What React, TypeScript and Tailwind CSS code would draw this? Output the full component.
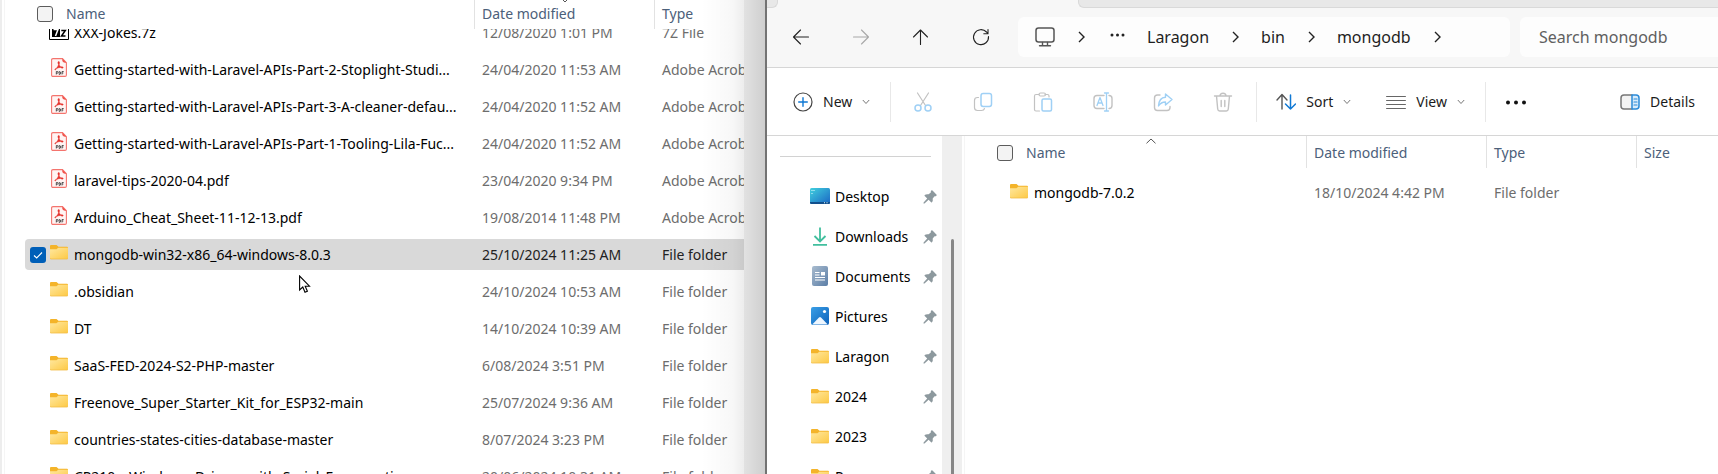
import type { ReactNode } from 'react'
import clsx from 'clsx'

type Kind = 'archive' | 'pdf' | 'folder'
type FileRow = { name: string; date: string; type: string; kind: Kind; selected?: boolean }

const downloads: FileRow[] = [
  { name: 'XXX-Jokes.7z', date: '12/08/2020 1:01 PM', type: '7Z File', kind: 'archive' },
  { name: 'Getting-started-with-Laravel-APIs-Part-2-Stoplight-Studi...', date: '24/04/2020 11:53 AM', type: 'Adobe Acrob', kind: 'pdf' },
  { name: 'Getting-started-with-Laravel-APIs-Part-3-A-cleaner-defau...', date: '24/04/2020 11:52 AM', type: 'Adobe Acrob', kind: 'pdf' },
  { name: 'Getting-started-with-Laravel-APIs-Part-1-Tooling-Lila-Fuc...', date: '24/04/2020 11:52 AM', type: 'Adobe Acrob', kind: 'pdf' },
  { name: 'laravel-tips-2020-04.pdf', date: '23/04/2020 9:34 PM', type: 'Adobe Acrob', kind: 'pdf' },
  { name: 'Arduino_Cheat_Sheet-11-12-13.pdf', date: '19/08/2014 11:48 PM', type: 'Adobe Acrob', kind: 'pdf' },
  { name: 'mongodb-win32-x86_64-windows-8.0.3', date: '25/10/2024 11:25 AM', type: 'File folder', kind: 'folder', selected: true },
  { name: '.obsidian', date: '24/10/2024 10:53 AM', type: 'File folder', kind: 'folder' },
  { name: 'DT', date: '14/10/2024 10:39 AM', type: 'File folder', kind: 'folder' },
  { name: 'SaaS-FED-2024-S2-PHP-master', date: '6/08/2024 3:51 PM', type: 'File folder', kind: 'folder' },
  { name: 'Freenove_Super_Starter_Kit_for_ESP32-main', date: '25/07/2024 9:36 AM', type: 'File folder', kind: 'folder' },
  { name: 'countries-states-cities-database-master', date: '8/07/2024 3:23 PM', type: 'File folder', kind: 'folder' },
  { name: 'CP210x_Windows_Drivers_with_Serial_Enumeration', date: '20/06/2024 10:31 AM', type: 'File folder', kind: 'folder' },
]

function FolderIcon() {
  return (
    <svg viewBox="0 0 18 15" className="h-[15px] w-[18px] shrink-0" aria-hidden="true">
      <defs>
        <linearGradient id="folder" x1="0" y1="0" x2="1" y2="1">
          <stop offset="0" stopColor="#ffe8a0" />
          <stop offset="1" stopColor="#fdc945" />
        </linearGradient>
      </defs>
      <path d="M0 1Q0 0 1 0h5.500l2 1.700H17q1 0 1 1V6H0Z" fill="#f4b42a" />
      <path d="M0 4.200h6.500L8.300 2.700H18V13q0 1-1 1H1q-1 0-1-1Z" fill="url(#folder)" />
      <path d="M0 13q0 1 1 1h16q1 0 1-1" fill="none" stroke="#f3bd48" strokeWidth="0.8" />
    </svg>
  )
}

function PdfIcon() {
  return (
    <svg viewBox="0 0 16 19" className="h-[19px] w-4 shrink-0" aria-hidden="true">
      <path d="M2 .6h9.500l3.900 4V17q0 1.400-1.400 1.400H2Q.6 18.400.6 17V2Q.6.6 2 .6Z" fill="#fff4f3" stroke="#f4746e" strokeWidth="1.100" />
      <path d="M11.300.6l4.100 4.200h-1.600q-2.500-.6-2.500-2.400Z" fill="#f0524b" />
      <path d="M7.800 3.500c-1.300 0-1 1.900-.2 3.200-.6 1.500-1.400 2.800-2.400 3.800-1.400.3-1.700 1-1.200 1.300.6.300 1.300-.5 1.900-1.500 1.200-.5 2.400-.8 3.700-.9 1 .8 2.400 1 2.600.3.100-.8-1.100-1-2.500-.9-.7-.6-1.200-1.300-1.500-2.100.4-1.400.5-3.200-.4-3.200Z" fill="#e5322d" stroke="#e5322d" strokeWidth="0.5" />
      <path d="M5.300 16.500v-3h1q.9 0 .9.800t-.9.900h-1M8.200 13.500v3q1.500 0 1.500-1.500T8.200 13.500M11 16.500v-3h1.700M11 15h1.400" fill="none" stroke="#333" strokeWidth="0.8" />
    </svg>
  )
}

function ArchiveIcon() {
  return (
    <svg viewBox="0 0 20 20" className="size-5 shrink-0" aria-hidden="true">
      <path d="M.5 4.500h19v14H.5Z" fill="#fff" stroke="#000" />
      <path d="M3 6h8v10H3Z" />
      <path d="M4.500 8.500h4.500L6.500 15" fill="none" stroke="#fff" strokeWidth="1.500" />
      <path d="M12.300 9.500h4L12.500 15h4" fill="none" stroke="#000" strokeWidth="1.500" />
    </svg>
  )
}

function FileIcon({ kind }: { kind: Kind }) {
  if (kind === 'pdf') return <PdfIcon />
  if (kind === 'archive') return <ArchiveIcon />
  return <FolderIcon />
}

function SelectAll({ label }: { label: string }) {
  return (
    <input
      type="checkbox"
      aria-label={label}
      className="size-4 shrink-0 appearance-none rounded-[3px] border border-[#5c5c5c] bg-[#f3f3f3]"
    />
  )
}

function Cursor() {
  return (
    <svg viewBox="0 0 13 19" className="pointer-events-none absolute top-[275px] left-[299px] h-[19px] w-[13px]" aria-hidden="true">
      <path d="M.6 1v14l3.200-3 2.200 5.200 2.400-1-2.200-5h4.300Z" fill="#fff" stroke="#000" strokeWidth="1.100" />
    </svg>
  )
}

function LeftWindow() {
  return (
    <section className="relative flex min-w-0 overflow-hidden border-r-2 border-[#737373] bg-white">
      <div className="w-[5px] shrink-0 border-r border-l-2 border-r-[#f5f5f5] border-l-[#ededed]" />
      <table className="ml-5 block min-w-0 flex-1">
        <thead className="relative z-10 block bg-white">
          <tr className="grid h-[29px] grid-cols-[minmax(0,1fr)_180px_90px] text-left text-[#4c607a]">
            <th className="flex items-center gap-[13px] pb-0.5 pl-3 font-normal">
              <SelectAll label="Select all downloads" />
              Name
            </th>
            <th className="relative flex items-center border-l border-[#e2e2e2] pb-0.5 pl-[7px] font-normal">
              Date modified
              <svg viewBox="0 0 10 5" className="absolute top-[-2px] left-[85px] h-[5px] w-[10px]" aria-hidden="true">
                <path d="M1 0l4 4 4-4" fill="none" stroke="#555" />
              </svg>
            </th>
            <th className="flex items-center border-l border-[#e2e2e2] pb-0.5 pl-[7px] font-normal">Type</th>
          </tr>
        </thead>
        <tbody className="-mt-[15px] block">
          {downloads.map((f) => (
            <tr key={f.name} className="grid h-[37px] grid-cols-[minmax(0,1fr)_180px_90px] py-[3px] whitespace-nowrap">
              <td className={clsx('flex min-w-0 items-center pl-[5px] text-black', f.selected && 'rounded-l-sm bg-[#d9d9d9]')}>
                <span className="flex w-[19px] shrink-0">
                  {f.selected && (
                    <label className="relative flex size-4">
                      <input type="checkbox" defaultChecked aria-label={f.name} className="size-4 appearance-none rounded-[3px] bg-[#005fb8]" />
                      <svg viewBox="0 0 16 16" className="pointer-events-none absolute inset-0 size-4" aria-hidden="true">
                        <path d="M4 8.500l2.700 2.500L12 5.500" fill="none" stroke="#fff" strokeWidth="1.100" />
                      </svg>
                    </label>
                  )}
                </span>
                <span className="mr-[5px] flex w-5 shrink-0 justify-center pb-1">
                  <FileIcon kind={f.kind} />
                </span>
                {f.name}
              </td>
              <td className={clsx('flex items-center pl-2', f.selected ? 'bg-[#d9d9d9] text-[#222]' : 'text-[#6d6d6d]')}>{f.date}</td>
              <td className={clsx('flex items-center pl-2', f.selected ? 'bg-[#d9d9d9] text-[#222]' : 'text-[#6d6d6d]')}>
                {f.type}
              </td>
            </tr>
          ))}
        </tbody>
      </table>
      <div className="w-[21px] shrink-0 bg-[#f3f3f3]" />
      <div className="pointer-events-none absolute inset-y-0 right-0 z-20 w-16 bg-linear-to-r from-black/0 via-black/3 to-black/15" />
      <Cursor />
    </section>
  )
}

type GlyphProps = { children: ReactNode; className?: string; stroke?: string }

function Glyph({ children, className = 'size-5', stroke = '#555' }: GlyphProps) {
  return (
    <svg viewBox="0 0 20 20" className={clsx('shrink-0', className)} fill="none" stroke={stroke} strokeWidth="1.200" strokeLinecap="round" strokeLinejoin="round" aria-hidden="true">
      {children}
    </svg>
  )
}

function Crumb() {
  return (
    <svg viewBox="0 0 7 12" className="h-3 w-[7px] shrink-0" fill="none" stroke="#222" strokeWidth="1.400" aria-hidden="true">
      <path d="M1 1l5 5-5 5" />
    </svg>
  )
}

function Caret() {
  return (
    <svg viewBox="0 0 8 6" className="h-1.5 w-2 shrink-0" fill="none" stroke="#777" aria-hidden="true">
      <path d="M.8 1l3.200 3.500L7.200 1" />
    </svg>
  )
}

const soft = '#c2c2c2'
const blue = '#9fd0f5'

function NavBar() {
  return (
    <div className="flex h-[60px] items-center border-b border-[#d6d6d6] bg-[#f7f7f7] pb-0.5 text-base text-[#1f1f1f]">
      <div className="flex gap-10 pl-6">
        <button aria-label="Back" className="flex size-5">
          <Glyph stroke="#222"><path d="M2.500 10h15M9.500 3l-7 7 7 7" strokeWidth="1.100" /></Glyph>
        </button>
        <button aria-label="Forward" className="flex size-5">
          <Glyph stroke="#a8a8a8"><path d="M2.500 10h15M10.500 3l7 7-7 7" strokeWidth="1.100" /></Glyph>
        </button>
        <button aria-label="Up" className="flex size-5">
          <Glyph stroke="#222"><path d="M9.500 17.500V3M2.500 10l7-7 7 7" strokeWidth="1.100" /></Glyph>
        </button>
        <button aria-label="Refresh" className="flex size-5">
          <Glyph stroke="#222"><path d="M17.500 9.500a7.500 7.500 0 1 1-2-4.500l1.500 1.700M17 2.500v4.200h-4.200" strokeWidth="1.100" /></Glyph>
        </button>
      </div>
      <nav aria-label="Address" className="ml-[27px] flex h-10 min-w-0 flex-[475] items-center rounded-md bg-[#fdfdfd] pl-[17px] whitespace-nowrap">
        <Glyph stroke="#555">
          <rect x="1" y="1" width="18" height="14" rx="2.500" strokeWidth="1.500" />
          <path d="M7.500 15.500v2.500M12.500 15.500v2.500M4.500 18.700h11" strokeWidth="1.400" />
        </Glyph>
        <span className="ml-[23px] flex"><Crumb /></span>
        <button aria-label="Parent folders" className="ml-6 flex pb-1">
          <svg viewBox="0 0 16 4" className="h-1 w-4" fill="#222" aria-hidden="true"><circle cx="3" cy="2" r="1.500" /><circle cx="8.500" cy="2" r="1.500" /><circle cx="14" cy="2" r="1.500" /></svg>
        </button>
        <a href="#laragon" className="ml-[22px]">Laragon</a>
        <span className="ml-[23px] flex"><Crumb /></span>
        <a href="#bin" className="ml-[22px]">bin</a>
        <span className="ml-[23px] flex"><Crumb /></span>
        <a href="#mongodb" className="ml-[22px]">mongodb</a>
        <span className="ml-[23px] flex"><Crumb /></span>
      </nav>
      <input
        aria-label="Search mongodb"
        placeholder="Search mongodb"
        className="ml-2.5 h-10 min-w-0 flex-[179] rounded-l-md bg-[#fdfdfd] pl-[19px] placeholder:text-[#606060] focus:outline-none"
      />
    </div>
  )
}

function Divider() {
  return <div className="h-10 w-px shrink-0 bg-[#e8e8e8]" />
}

function Toolbar() {
  return (
    <div className="flex h-[68px] items-center border-b border-[#d6d6d6] bg-white pt-px pr-[23px] text-[#1b1b1b]">
      <button className="ml-[26px] flex items-center gap-2.5">
        <Glyph stroke="#444"><circle cx="10" cy="10" r="9" /><path d="M10 5.700v8.600M5.700 10h8.600" stroke="#0f78d4" strokeWidth="1.400" /></Glyph>
        New
        <Caret />
      </button>
      <span className="ml-5 flex"><Divider /></span>
      <div className="ml-[22px] flex gap-10">
        <button aria-label="Cut" className="flex">
          <Glyph stroke={soft}>
            <path d="M4.500 1l8 12.500M15.500 1l-8 12.500" />
            <g stroke={blue} strokeWidth="1.500"><circle cx="5" cy="16" r="3" /><circle cx="15" cy="16" r="3" /></g>
          </Glyph>
        </button>
        <button aria-label="Copy" className="flex">
          <Glyph stroke={soft}>
            <path d="M5.500 5.500h-1Q1.500 5.500 1.500 8.500v7q0 3 3 3h4q2.500 0 3-2" />
            <rect x="8" y="1.500" width="10.500" height="13" rx="2.200" stroke={blue} strokeWidth="1.500" />
          </Glyph>
        </button>
        <button aria-label="Paste" className="flex">
          <Glyph stroke={soft}>
            <path d="M6 2.500H3q-1.500 0-1.500 1.500v13.500q0 1.500 1.500 1.500h3.500M12 2.500h2.500Q16 2.500 16 4v1" />
            <rect x="6" y="1" width="6.500" height="3" rx="1.500" />
            <rect x="9" y="7" width="9.500" height="12" rx="1.500" stroke={blue} strokeWidth="1.500" />
          </Glyph>
        </button>
        <button aria-label="Rename" className="flex">
          <Glyph stroke={soft}>
            <path d="M11 3.500H4Q1 3.500 1 6.500v7q0 3 3 3h7M16 3.500q3 0 3 3v7q0 3-3 3" strokeWidth="1.400" />
            <path d="M4 13.500l3-8 3 8M5 11h4M11.500 1h4M11.500 19h4M13.500 1v18" stroke={blue} strokeWidth="1.300" />
          </Glyph>
        </button>
        <button aria-label="Share" className="flex">
          <Glyph stroke={soft}>
            <path d="M7 3H4.500q-3 0-3 3v9.500q0 3 3 3H14q3 0 3-3v-1" strokeWidth="1.400" />
            <path d="M12.500 2l6.500 5.500-6.500 5.500V10Q8 10 5.500 14 6 5.500 12.500 5.200Z" stroke={blue} strokeWidth="1.400" />
          </Glyph>
        </button>
        <button aria-label="Delete" className="flex">
          <Glyph stroke={soft}>
            <path d="M1.500 4h17M7 4q0-2.800 3-2.800T13 4M3.500 4l1.200 13q.2 2 2 2h6.600q1.800 0 2-2l1.200-13M8.200 8.500v6M11.800 8.500v6" strokeWidth="1.400" />
          </Glyph>
        </button>
      </div>
      <span className="ml-[23px] flex"><Divider /></span>
      <button className="ml-[19px] flex items-center gap-2.5">
        <Glyph stroke="#555">
          <path d="M6 17V3M1 8l5-5.500L11 8" strokeWidth="1.400" />
          <path d="M14.500 3v14M9.500 12l5 5 5-5" stroke="#0f78d4" strokeWidth="1.500" />
        </Glyph>
        Sort
        <Caret />
      </button>
      <button className="ml-[35px] flex items-center gap-2.5">
        <Glyph stroke="#666"><path d="M.6 4.500h18.800M.6 8.500h18.800M.6 12.500h18.800M.6 16.500h18.800" strokeWidth="1.200" /></Glyph>
        View
        <Caret />
      </button>
      <span className="ml-5 flex"><Divider /></span>
      <button aria-label="See more" className="ml-[19px] flex">
        <svg viewBox="0 0 22 5" className="h-[5px] w-[22px]" fill="#111" aria-hidden="true"><circle cx="3" cy="2.500" r="2" /><circle cx="11" cy="2.500" r="2" /><circle cx="19" cy="2.500" r="2" /></svg>
      </button>
      <button className="ml-auto flex items-center gap-2.5">
        <Glyph>
          <path d="M12 3H4Q1 3 1 6v8q0 3 3 3h8" fill="#f3f3f3" strokeWidth="1.500" stroke="#777" />
          <path d="M12 3h4q3 0 3 3v8q0 3-3 3h-4Z" fill="#d9ecfb" stroke="#2b8ad8" strokeWidth="1.500" />
          <path d="M14 7h3M14 10h3M14 13h3" stroke="#2b8ad8" />
        </Glyph>
        Details
      </button>
    </div>
  )
}

function DesktopIcon() {
  return (
    <svg viewBox="0 0 20 16" className="h-4 w-5" aria-hidden="true">
      <defs><linearGradient id="desk" x1="0" y1="0" x2="1" y2="1"><stop offset="0" stopColor="#41d0de" /><stop offset="1" stopColor="#1a66c4" /></linearGradient></defs>
      <rect width="20" height="16" rx="1.500" fill="url(#desk)" />
      <path d="M0 14h20v.5q0 1.500-1.500 1.500h-17Q0 16 0 14.500Z" fill="#124f8c" />
      <path d="M1.500 2h1v1h-1ZM3.500 2h1v1h-1ZM1.500 5h1v1h-1ZM14 14.300h1v1h-1ZM16.500 14.300h1v1h-1Z" fill="#e3fbff" />
    </svg>
  )
}

function DownloadsIcon() {
  return (
    <svg viewBox="0 0 16 19" className="h-[19px] w-4" fill="none" stroke="#42bf9e" strokeWidth="1.800" aria-hidden="true">
      <path d="M8 .5v13.500M2.500 9L8 14.500 13.500 9M1 17.800h14" />
    </svg>
  )
}

function DocumentsIcon() {
  return (
    <svg viewBox="0 0 16 20" className="h-5 w-4" aria-hidden="true">
      <defs><linearGradient id="doc" x1="0" y1="0" x2="1" y2="1"><stop offset="0" stopColor="#a9bccf" /><stop offset="1" stopColor="#5b7da6" /></linearGradient></defs>
      <rect width="16" height="20" rx="2" fill="url(#doc)" />
      <path d="M3 6.500h4.500M3 9h4.500M3 11.500h10M3 14h10" stroke="#fff" strokeWidth="1.200" />
      <path d="M9 6h4v3.500H9Z" fill="#fff" />
    </svg>
  )
}

function PicturesIcon() {
  return (
    <svg viewBox="0 0 18 18" className="size-[18px]" aria-hidden="true">
      <defs><linearGradient id="pic" x1="0" y1="0" x2="1" y2="1"><stop offset="0" stopColor="#3a9fe6" /><stop offset="1" stopColor="#0d62bb" /></linearGradient></defs>
      <rect width="18" height="18" rx="2" fill="url(#pic)" />
      <path d="M1.500 17.200L8 10.500q1-1 2 0l6.500 6.700q-.5.400-1 .4h-13q-.6 0-1-.4Z" fill="#eff7ff" />
      <circle cx="13.500" cy="4.500" r="1.600" fill="#fff" />
    </svg>
  )
}

function Pin() {
  return (
    <svg viewBox="0 0 14 14" className="size-3.5 shrink-0" fill="#8d999e" aria-hidden="true">
      <path d="M8.300.6q.6-.6 1.200 0L13.400 4.500q.6.600 0 1.200-.8.700-1.800.5L9.700 8.400q.5 2.300-.8 3.900-.4.400-.8 0L5.600 9.800 1.500 13.400l-1 .1.100-1L4.200 8.400 1.700 5.900q-.4-.4 0-.8Q3.300 3.800 5.600 4.300L7.800 2.400Q7.600 1.400 8.300.6Z" />
    </svg>
  )
}

const pinned: { label: string; icon: ReactNode }[] = [
  { label: 'Desktop', icon: <DesktopIcon /> },
  { label: 'Downloads', icon: <DownloadsIcon /> },
  { label: 'Documents', icon: <DocumentsIcon /> },
  { label: 'Pictures', icon: <PicturesIcon /> },
  { label: 'Laragon', icon: <FolderIcon /> },
  { label: '2024', icon: <FolderIcon /> },
  { label: '2023', icon: <FolderIcon /> },
  { label: 'Pass', icon: <FolderIcon /> },
]

function Sidebar() {
  return (
    <div className="flex w-[198px] shrink-0 border-r border-[#f5f5f5]">
      <div className="flex w-[175px] flex-col pt-5">
        <div className="mr-[11px] ml-[13px] h-px shrink-0 bg-[#d2d2d2]" />
        <ul className="pt-5">
          {pinned.map((p) => (
            <li key={p.label}>
              <a href={'#' + p.label} className="flex h-10 items-center pr-[5px] pl-[43px] text-black">
                <span className="mr-[5px] flex w-5 shrink-0 justify-center pb-0.5">{p.icon}</span>
                <span className="flex-1">{p.label}</span>
                <Pin />
              </a>
            </li>
          ))}
        </ul>
      </div>
      <div className="flex w-5 shrink-0 justify-center bg-[#efefef] pt-[103px]">
        <div className="w-[3px] rounded-t-full bg-[#868686]" />
      </div>
    </div>
  )
}

function FolderTable() {
  return (
    <table className="block min-w-0 flex-1">
      <thead className="block">
        <tr className="grid h-8 grid-cols-[341fr_180fr_150fr_82fr] text-left text-[#4c607a]">
          <th className="relative flex items-center gap-[13px] pt-px pl-8 font-normal">
            <SelectAll label="Select all items" />
            Name
            <svg viewBox="0 0 10 6" className="absolute top-0.5 left-[181px] h-1.5 w-2.5" aria-hidden="true">
              <path d="M.5 5.300L5 1l4.500 4.300" fill="none" stroke="#555" />
            </svg>
          </th>
          {['Date modified', 'Type', 'Size'].map((h) => (
            <th key={h} className="flex items-center border-l border-[#e2e2e2] pt-0.5 pl-[7px] font-normal">{h}</th>
          ))}
        </tr>
      </thead>
      <tbody className="block">
        <tr className="mt-1.5 grid h-[38px] grid-cols-[341fr_180fr_150fr_82fr] text-[#6d6d6d]">
          <td className="flex items-center pl-[45px] text-black">
            <span className="mr-1.5 flex pb-1"><FolderIcon /></span>
            mongodb-7.0.2
          </td>
          <td className="flex items-center pl-2">18/10/2024 4:42 PM</td>
          <td className="flex items-center pl-2">File folder</td>
          <td />
        </tr>
      </tbody>
    </table>
  )
}

function RightWindow() {
  return (
    <section className="flex min-w-0 flex-col bg-white">
      <div className="flex h-2 shrink-0 bg-[#f7f7f7]">
        <div className="w-[11px] rounded-br-md border-r border-b border-[#d9d9d9] bg-[#e8e8e8]" />
        <div className="w-[300px]" />
        <div className="flex-1 rounded-bl-md border-b border-l border-[#d9d9d9] bg-[#e8e8e8]" />
      </div>
      <NavBar />
      <Toolbar />
      <div className="flex min-h-0 flex-1 overflow-hidden">
        <Sidebar />
        <FolderTable />
      </div>
    </section>
  )
}

export default function App() {
  return (
    <main className="grid h-screen grid-cols-[minmax(0,767fr)_minmax(0,951fr)] grid-rows-[minmax(0,1fr)] overflow-hidden font-['Noto_Sans',sans-serif] text-sm">
      <LeftWindow />
      <RightWindow />
    </main>
  )
}
